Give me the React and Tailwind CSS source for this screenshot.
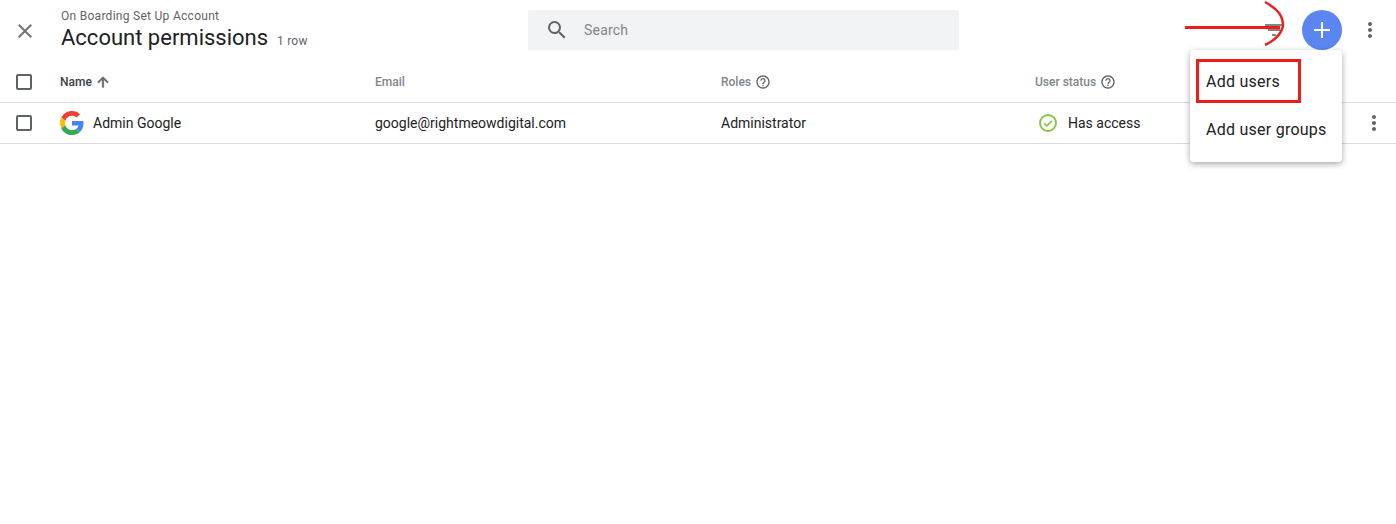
import React from "react";

const font = { fontFamily: "Roboto, sans-serif" };

function Checkbox() {
  return <div className="w-[16px] h-[16px] rounded-[2px] border-2 border-[#5f6368]" />;
}

function Help() {
  return (
    <svg width="16" height="16" viewBox="0 0 24 24" fill="#5f6368" className="ml-[4px]">
      <path d="M11 18h2v-2h-2v2zm1-16C6.48 2 2 6.48 2 12s4.48 10 10 10 10-4.48 10-10S17.52 2 12 2zm0 18c-4.41 0-8-3.59-8-8s3.59-8 8-8 8 3.59 8 8-3.59 8-8 8zm0-14c-2.21 0-4 1.79-4 4h2c0-1.1.9-2 2-2s2 .9 2 2c0 2-3 1.75-3 5h2c0-2.25 3-2.5 3-5 0-2.21-1.79-4-4-4z" />
    </svg>
  );
}

function Dots({ className = "" }) {
  return (
    <svg width="24" height="24" viewBox="0 0 24 24" fill="#5f6368" className={className}>
      <path d="M12 8c1.1 0 2-.9 2-2s-.9-2-2-2-2 .9-2 2 .9 2 2 2zm0 2c-1.1 0-2 .9-2 2s.9 2 2 2 2-.9 2-2-.9-2-2-2zm0 6c-1.1 0-2 .9-2 2s.9 2 2 2 2-.9 2-2-.9-2-2-2z" />
    </svg>
  );
}

function GoogleG() {
  return (
    <svg width="24" height="24" viewBox="0 0 48 48">
      <path fill="#EA4335" d="M24 9.5c3.54 0 6.71 1.22 9.21 3.6l6.85-6.85C35.9 2.38 30.47 0 24 0 14.62 0 6.51 5.38 2.56 13.22l7.98 6.19C12.43 13.72 17.74 9.5 24 9.5z" />
      <path fill="#4285F4" d="M46.98 24.55c0-1.57-.15-3.09-.38-4.55H24v9.02h12.94c-.58 2.96-2.26 5.48-4.78 7.18l7.73 6c4.51-4.18 7.09-10.36 7.09-17.65z" />
      <path fill="#FBBC05" d="M10.53 28.59c-.48-1.45-.76-2.99-.76-4.59s.27-3.14.76-4.59l-7.98-6.19C.92 16.46 0 20.12 0 24c0 3.88.92 7.54 2.56 10.78l7.97-6.19z" />
      <path fill="#34A853" d="M24 48c6.48 0 11.93-2.13 15.89-5.81l-7.73-6c-2.15 1.45-4.92 2.3-8.16 2.3-6.26 0-11.57-4.22-13.47-9.91l-7.98 6.19C6.51 42.62 14.62 48 24 48z" />
    </svg>
  );
}

export default function App() {
  return (
    <div className="relative w-[1396px] h-[524px] bg-white overflow-hidden" style={font}>
      {/* Top bar */}
      <div className="flex items-center h-[61px]">
        <div className="w-[528px] flex items-center shrink-0">
          <div className="w-[60px] flex pl-[13px] shrink-0">
            <svg width="24" height="24" viewBox="0 0 24 24" fill="#6f7479">
              <path d="M19 6.41 17.59 5 12 10.59 6.41 5 5 6.41 10.59 12 5 17.59 6.41 19 12 13.41 17.59 19 19 17.59 13.41 12z" />
            </svg>
          </div>
          <div className="pl-px mt-[1px]">
            <div className="text-[12px] leading-[13px] tracking-[0.28px] text-[#5f6368]">On Boarding Set Up Account</div>
            <div className="flex items-baseline">
              <span className="text-[22px] leading-[29px] text-[#202124]">Account permissions</span>
              <span className="ml-[9px] text-[12px] tracking-[0.2px] text-[#5f6368]">1 row</span>
            </div>
          </div>
        </div>
        <div className="w-[431px] h-[40px] -mt-[1px] bg-[#f1f3f4] rounded-[2px] flex items-center pl-[17px] shrink-0">
          <svg width="24" height="24" viewBox="0 0 24 24" fill="#5f6368">
            <path d="M15.5 14h-.79l-.28-.27A6.47 6.47 0 0 0 16 9.5 6.5 6.5 0 1 0 9.5 16c1.61 0 3.09-.59 4.23-1.57l.27.28v.79l5 4.99L20.49 19l-4.99-5zm-6 0C7.01 14 5 11.99 5 9.5S7.01 5 9.5 5 14 7.01 14 9.5 11.99 14 9.5 14z" />
          </svg>
          <span className="ml-[15px] text-[14px] tracking-[0.2px] text-[#80868b]">Search</span>
        </div>
        <div className="flex-1 flex items-center justify-end -mt-[1px]">
          <svg width="24" height="24" viewBox="0 0 24 24" fill="#80868b" className="mr-[16px]">
            <path d="M10 18h4v-2h-4v2zM3 6v2h18V6H3zm3 7h12v-2H6v2z" />
          </svg>
          <div className="w-[40px] h-[40px] rounded-full bg-[#5b86f2] flex items-center justify-center">
            <svg width="24" height="24" viewBox="0 0 24 24" fill="#fff">
              <path d="M20 13h-7v7h-2v-7H4v-2h7V4h2v7h7z" />
            </svg>
          </div>
          <Dots className="ml-[16px] mr-[14px]" />
        </div>
      </div>

      {/* Table header */}
      <div className="flex items-center h-[42px] border-b border-[#dadce0] text-[12px] font-medium text-[#80868b]">
        <div className="w-[60px] flex pl-[16px] shrink-0"><Checkbox /></div>
        <div className="w-[315px] flex items-center shrink-0 text-[#3c4043]">
          Name
          <svg width="16" height="16" viewBox="0 0 24 24" fill="#5f6368" stroke="#5f6368" strokeWidth="1" className="ml-[3px]">
            <path d="M4 12l1.41 1.41L11 7.83V20h2V7.83l5.58 5.59L20 12l-8-8-8 8z" />
          </svg>
        </div>
        <div className="w-[346px] shrink-0">Email</div>
        <div className="w-[314px] flex items-center shrink-0">Roles<Help /></div>
        <div className="flex items-center">User status<Help /></div>
      </div>

      {/* Row */}
      <div className="flex items-center h-[41px] border-b border-[#dadce0] text-[14px] text-[#202124]">
        <div className="w-[60px] flex pl-[16px] shrink-0"><Checkbox /></div>
        <div className="w-[315px] flex items-center shrink-0">
          <GoogleG />
          <span className="ml-[9px]">Admin Google</span>
        </div>
        <div className="w-[346px] shrink-0">google@rightmeowdigital.com</div>
        <div className="w-[314px] shrink-0">Administrator</div>
        <div className="flex items-center flex-1">
          <svg width="20" height="20" viewBox="0 0 20 20" fill="none" stroke="#8bc34a" strokeWidth="2" className="ml-[3px]">
            <circle cx="10" cy="10" r="8" />
            <path d="M6.2 10.3l2.7 2.6 5-5" strokeWidth="1.6" />
          </svg>
          <span className="ml-[10px]">Has access</span>
          <Dots className="ml-auto mr-[10px]" />
        </div>
      </div>

      {/* Dropdown menu */}
      <div className="absolute left-[1190px] top-[50px] w-[152px] h-[112px] bg-white rounded-[4px] shadow-[0_2px_6px_rgba(0,0,0,0.35)] text-[16px] tracking-[0.25px] text-[#202124] flex flex-col pt-[8px]">
        <div className="h-[48px] flex items-center pl-[16px]">Add users</div>
        <div className="h-[48px] flex items-center pl-[16px]">Add user groups</div>
      </div>

      {/* Red annotations */}
      <div className="absolute left-[1196px] top-[59px] w-[105px] h-[44px] border-[3px] border-[#ee1c1c]" />
      <svg className="absolute left-[1180px] top-0" width="120" height="50" viewBox="0 0 120 50" fill="none" stroke="#ee1c1c">
        <path d="M5 27.5H100" strokeWidth="3" />
        <path d="M85 2C100 10 103 19 103 24C103 32 96 40 85 45" strokeWidth="2.5" />
      </svg>
    </div>
  );
}
